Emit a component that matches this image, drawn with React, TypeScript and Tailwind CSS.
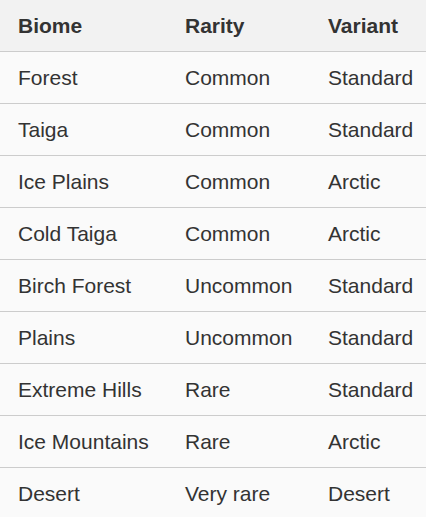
import React from "react";

const rows: [string, string, string][] = [
  ["Forest", "Common", "Standard"],
  ["Taiga", "Common", "Standard"],
  ["Ice Plains", "Common", "Arctic"],
  ["Cold Taiga", "Common", "Arctic"],
  ["Birch Forest", "Uncommon", "Standard"],
  ["Plains", "Uncommon", "Standard"],
  ["Extreme Hills", "Rare", "Standard"],
  ["Ice Mountains", "Rare", "Arctic"],
  ["Desert", "Very rare", "Desert"],
];

export default function App() {
  return (
    <div className="w-[426px] h-[517px] overflow-hidden bg-[#fafafa] text-[#333333] text-[21px]" style={{ fontFamily: '"Liberation Sans", Arial, sans-serif' }}>
      <div className="grid grid-cols-[185px_143px_1fr] h-[52px] bg-[#f2f2f2] border-b border-[#cccccc] font-bold items-center">
        <div className="pl-[18px]">Biome</div>
        <div>Rarity</div>
        <div>Variant</div>
      </div>
      {rows.map((r, i) => (
        <div key={i} className="grid grid-cols-[185px_143px_1fr] h-[52px] border-b border-[#cccccc] items-center">
          <div className="pl-[18px]">{r[0]}</div>
          <div>{r[1]}</div>
          <div>{r[2]}</div>
        </div>
      ))}
    </div>
  );
}
